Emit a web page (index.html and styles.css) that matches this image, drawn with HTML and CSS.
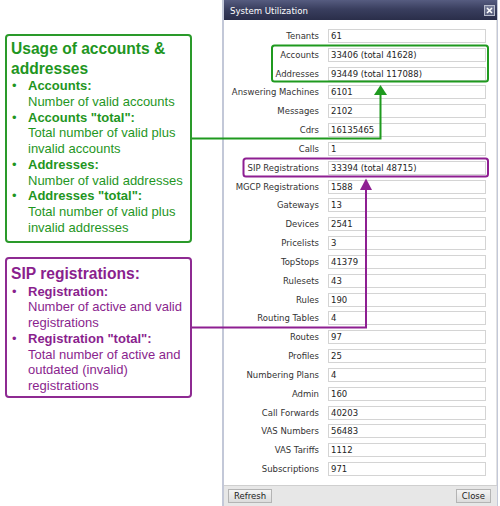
FILE: index.html
```html
<!DOCTYPE html>
<html lang="en">
<head>
<meta charset="utf-8">
<title>System Utilization</title>
<link rel="stylesheet" href="styles.css">
</head>
<body>
<div class="page">
  <aside class="notes">
    <section class="note note-green">
      <h2>Usage of accounts &amp; addresses</h2>
      <ul>
        <li><span class="dot">•</span><div><b>Accounts:</b><br>Number of valid accounts</div></li>
        <li><span class="dot">•</span><div><b>Accounts "total":</b><br>Total number of valid plus invalid accounts</div></li>
        <li><span class="dot">•</span><div><b>Addresses:</b><br>Number of valid addresses</div></li>
        <li><span class="dot">•</span><div><b>Addresses "total":</b><br>Total number of valid plus invalid addresses</div></li>
      </ul>
    </section>
    <section class="note note-purple">
      <h2>SIP registrations:</h2>
      <ul>
        <li><span class="dot">•</span><div><b>Registration:</b><br>Number of active and valid registrations</div></li>
        <li><span class="dot">•</span><div><b>Registration "total":</b><br>Total number of active and outdated (invalid) registrations</div></li>
      </ul>
    </section>
  </aside>

  <div class="dialog">
    <div class="titlebar">
      <span class="title">System Utilization</span>
      <span class="close-x">
        <svg width="7" height="7" viewBox="0 0 7 7"><path d="M1 1 L6 6 M6 1 L1 6" stroke="#fff" stroke-width="1.6" fill="none"/></svg>
      </span>
    </div>
    <div class="content">
      <div class="grid">
        <label>Tenants</label><div class="field">61</div>
        <label>Accounts</label><div class="field">33406 (total 41628)</div>
        <label>Addresses</label><div class="field">93449 (total 117088)</div>
        <label>Answering Machines</label><div class="field">6101</div>
        <label>Messages</label><div class="field">2102</div>
        <label>Cdrs</label><div class="field">16135465</div>
        <label>Calls</label><div class="field">1</div>
        <label>SIP Registrations</label><div class="field">33394 (total 48715)</div>
        <label>MGCP Registrations</label><div class="field">1588</div>
        <label>Gateways</label><div class="field">13</div>
        <label>Devices</label><div class="field">2541</div>
        <label>Pricelists</label><div class="field">3</div>
        <label>TopStops</label><div class="field">41379</div>
        <label>Rulesets</label><div class="field">43</div>
        <label>Rules</label><div class="field">190</div>
        <label>Routing Tables</label><div class="field">4</div>
        <label>Routes</label><div class="field">97</div>
        <label>Profiles</label><div class="field">25</div>
        <label>Numbering Plans</label><div class="field">4</div>
        <label>Admin</label><div class="field">160</div>
        <label>Call Forwards</label><div class="field">40203</div>
        <label>VAS Numbers</label><div class="field">56483</div>
        <label>VAS Tariffs</label><div class="field">1112</div>
        <label>Subscriptions</label><div class="field">971</div>
      </div>
    </div>
    <div class="footer">
      <button class="btn">Refresh</button>
      <button class="btn">Close</button>
    </div>
  </div>

  <svg class="overlay" width="500" height="506" viewBox="0 0 500 506">
    <g class="link-green">
      <rect x="272" y="45.5" width="216" height="36" rx="2.5"/>
      <path d="M192 138.5 H380.5 V93"/>
      <polygon points="374,95 380.5,85 387,95"/>
    </g>
    <g class="link-purple">
      <rect x="243.5" y="158.5" width="244.5" height="18" rx="2.5"/>
      <path d="M192 327.5 H366 V188"/>
      <polygon points="360,190 366,178.5 372,190"/>
    </g>
  </svg>
</div>
</body>
</html>
```

FILE: styles.css
```css
html, body {
  margin: 0;
  padding: 0;
  background: #ffffff;
}

.page {
  position: relative;
  width: 500px;
  height: 506px;
  display: flex;
  overflow: hidden;
}

/* ---------- annotation notes ---------- */
.notes {
  width: 222px;
  flex: none;
  box-sizing: border-box;
  padding: 34px 0 0 5px;
  display: flex;
  flex-direction: column;
  gap: 14px;
  font-family: "Liberation Sans", Arial, sans-serif;
}

.note {
  width: 187px;
  box-sizing: border-box;
  border: 2px solid;
  border-radius: 4px;
  padding: 3px 3px 6px 4px;
}

.note h2 {
  margin: 0;
  font-size: 15.6px;
  line-height: 19.5px;
  font-weight: bold;
}

.note ul {
  list-style: none;
  margin: 0;
  padding: 0;
  font-size: 13px;
  line-height: 15.75px;
}

.note li {
  display: flex;
}

.note .dot {
  width: 17px;
  flex: none;
  padding-left: 1px;
  box-sizing: border-box;
}

.note-green {
  border-color: #2a9a2a;
  color: #1f961f;
  height: 209px;
}

.note-purple {
  border-color: #8e2a92;
  color: #8a1f8e;
  padding-top: 5px;
  height: 141px;
}

/* ---------- dialog ---------- */
.dialog {
  width: 276px;
  flex: none;
  box-sizing: border-box;
  border-left: 2px solid #c3c8d8;
  border-right: 1px solid #c3c8d8;
  display: flex;
  flex-direction: column;
  font-family: "DejaVu Sans", Verdana, sans-serif;
  font-size: 8.5px;
  color: #2a2a2a;
}

.titlebar {
  height: 20px;
  flex: none;
  box-sizing: border-box;
  background: linear-gradient(#565c80, #3a3f5f 45%, #2a2e4a);
  display: flex;
  align-items: center;
  justify-content: space-between;
  padding: 0 2px 0 6px;
}

.title {
  color: #ffffff;
  font-size: 8.6px;
  line-height: 12px;
  padding-top: 1px;
}

.close-x {
  width: 11px;
  height: 11px;
  box-sizing: border-box;
  border: 1px solid #b9bdcc;
  background: linear-gradient(#7a809c, #5a607e);
  display: flex;
  align-items: center;
  justify-content: center;
}

.content {
  flex: 1;
  background: #ffffff;
  border-right: 1px solid #e2e2e2;
  padding: 9px 10px 0 0;
}

.grid {
  display: grid;
  grid-template-columns: 1fr 158px;
  grid-auto-rows: 14px;
  column-gap: 9px;
  row-gap: 4.84px;
}

.grid label {
  text-align: right;
  line-height: 14px;
  white-space: nowrap;
  color: #333333;
}

.field {
  box-sizing: border-box;
  height: 14px;
  border: 1px solid #d4d4d4;
  background: #ffffff;
  padding-left: 2px;
  line-height: 12px;
  color: #1e1e1e;
  white-space: nowrap;
}

.footer {
  height: 21px;
  flex: none;
  box-sizing: border-box;
  border-top: 1px solid #cfcfcf;
  background: #e7e7e7;
  display: flex;
  justify-content: space-between;
  align-items: flex-start;
  padding: 3px 6px 0 4px;
}

.btn {
  height: 14px;
  box-sizing: border-box;
  margin: 0;
  padding: 0 5px;
  border: 1px solid #b4b4b4;
  background: linear-gradient(#f4f4f4, #dcdcdc);
  font-family: "DejaVu Sans", Verdana, sans-serif;
  font-size: 8.5px;
  line-height: 12px;
  color: #222222;
}

/* ---------- overlay connectors ---------- */
.overlay {
  position: absolute;
  left: 0;
  top: 0;
  pointer-events: none;
}

.overlay rect,
.overlay path {
  fill: none;
  stroke-width: 2;
}

.link-green rect,
.link-green path { stroke: #1f9a1f; }
.link-green polygon { fill: #1f9a1f; }

.link-purple rect,
.link-purple path { stroke: #8e1f92; }
.link-purple polygon { fill: #8e1f92; }
```
